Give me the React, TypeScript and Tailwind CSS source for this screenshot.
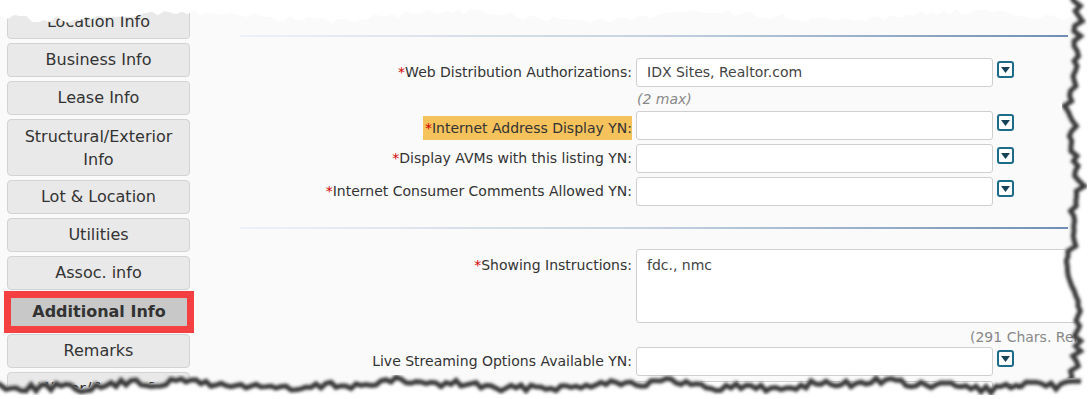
import React from "react";

const font = { fontFamily: '"DejaVu Sans", Verdana, sans-serif' };

function rand(seed: number) {
  let s = seed;
  return () => {
    s = (s * 1103515245 + 12345) % 2147483648;
    return s / 2147483648;
  };
}

// torn-paper edge points, computed once
function edge(seed: number, from: number, to: number, step: number, base: (t: number) => number, amp: number) {
  const r = rand(seed);
  const pts: [number, number][] = [];
  for (let t = from; t <= to; t += step) {
    pts.push([t, base(t) + (r() - 0.5) * amp]);
  }
  return pts;
}

const bottom = edge(7, -10, 1080, 5, (x) => 382 + Math.sin(x / 37) * 3 + Math.sin(x / 11) * 1.5, 7);
const right = edge(13, -10, 400, 5, (y) => 1071 + Math.sin(y / 23) * 4 + Math.sin(y / 9) * 2, 9);
const top = edge(29, -10, 1090, 6, (x) => 16 + Math.sin(x / 41) * 4, 7);

const line = (p: [number, number][]) => p.map(([a, b]) => `${a},${b}`).join(" ");
const bottomLine = line(bottom);
const rightLine = right.map(([y, x]) => `${x},${y}`).join(" ");
const topLine = line(top);

function TornEdges() {
  return (
    <svg className="absolute inset-0 pointer-events-none" width={1088} height={399}>
      <defs>
        <filter id="blur" x="-10%" y="-10%" width="120%" height="120%">
          <feGaussianBlur stdDeviation="1.6" />
        </filter>
      </defs>
      {/* top: soft white tear */}
      <polygon points={`-10,-10 ${topLine} 1090,-10`} fill="#ffffff" />
      {/* right */}
      <polygon points={`${rightLine} 1100,400 1100,-10`} fill="#ffffff" />
      <polyline points={rightLine} fill="none" stroke="#3a3a3a" strokeWidth={5} filter="url(#blur)" transform="translate(3,1)" />
      {/* bottom */}
      <polygon points={`${bottomLine} 1090,410 -10,410`} fill="#ffffff" />
      <polyline points={bottomLine} fill="none" stroke="#3a3a3a" strokeWidth={5} filter="url(#blur)" transform="translate(1,3)" />
    </svg>
  );
}

function NavButton({ label, tall }: { label: React.ReactNode; tall?: boolean }) {
  return (
    <div
      className={`w-[183px] ${tall ? "h-[57px] leading-[23px]" : "h-[34px]"} shrink-0 flex items-center justify-center text-center rounded-[4px] border border-[#d3d3d3] bg-[#e9e9e9] text-[16px] text-[#333]`}
    >
      <span>{label}</span>
    </div>
  );
}

function Dropdown() {
  return (
    <div className="ml-[4px] self-start mt-[3px] w-[17px] h-[17px] rounded-[3px] border-[2px] border-[#1b6b89] bg-white flex items-center justify-center">
      <svg width="9" height="6" viewBox="0 0 9 6">
        <polygon points="0,0 9,0 4.5,6" fill="#16435a" />
      </svg>
    </div>
  );
}

function Req() {
  return <span className="text-[#d00000]">*</span>;
}

function Row({ label, value, highlight }: { label?: React.ReactNode; value?: string; highlight?: boolean }) {
  return (
    <div className="flex items-center h-[29px]">
      <div className="w-[439px] pr-[4px] text-right text-[14px] text-[#333]">
        {highlight ? <span className="inline-block bg-[#f5c25c] leading-[24px] pl-[2px] mt-[5px]">{label}</span> : label}
      </div>
      <div className="w-[357px] h-[29px] rounded-[3px] border border-[#cfcfcf] bg-white px-[10px] flex items-center text-[14px] text-[#444]">
        {value}
      </div>
      <Dropdown />
    </div>
  );
}

function Divider() {
  return <div className="ml-[43px] w-[828px] h-[2px] shrink-0 bg-gradient-to-r from-[#eef2f6] via-[#c4d2e0] to-[#6f8fb3]" />;
}

export default function App() {
  return (
    <div className="relative w-[1088px] h-[399px] overflow-hidden bg-[#fafafa] flex" style={font}>
      {/* sidebar */}
      <div className="w-[197px] pl-[7px] pt-[5px] flex flex-col gap-[4px] shrink-0">
        <NavButton label="Location Info" />
        <NavButton label="Business Info" />
        <NavButton label="Lease Info" />
        <NavButton tall label={<>Structural/Exterior<br />Info</>} />
        <NavButton label="Lot &amp; Location" />
        <NavButton label="Utilities" />
        <NavButton label="Assoc. info" />
        <div className="-ml-[3px] -mt-[3px] -mb-[3px] w-[190px] h-[42px] shrink-0 border-[7px] border-[#f44040] bg-[#c8c8c8] flex items-center justify-center text-[16px] font-bold text-[#333]">
          Additional Info
        </div>
        <NavButton label="Remarks" />
        <NavButton label="Water/Sewer &amp;" />
      </div>

      {/* form */}
      <div className="flex-1 flex flex-col pt-[35px]">
        <Divider />
        <div className="mt-[21px]">
          <Row label={<><Req />Web Distribution Authorizations:</>} value="IDX Sites, Realtor.com" />
        </div>
        <div className="h-[24px] shrink-0 pl-[440px] pt-[2px] text-[14px] italic text-[#888]">(2 max)</div>
        <Row highlight label={<><Req />Internet Address Display YN:</>} />
        <div className="mt-[4px]">
          <Row label={<><Req />Display AVMs with this listing YN:</>} />
        </div>
        <div className="mt-[4px]">
          <Row label={<><Req />Internet Consumer Comments Allowed YN:</>} />
        </div>
        <div className="mt-[21px]">
          <Divider />
        </div>
        <div className="mt-[20px] flex items-start">
          <div className="w-[439px] pr-[4px] pt-[6px] text-right text-[14px] text-[#333]">
            <Req />Showing Instructions:
          </div>
          <div className="w-[470px] h-[74px] rounded-[3px] border border-[#cfcfcf] bg-white px-[10px] pt-[5px] text-[14px] text-[#444]">
            fdc., nmc
          </div>
        </div>
        <div className="h-[24px] shrink-0 pl-[773px] pt-[4px] text-[14px] text-[#888] whitespace-nowrap">(291 Chars. Remaining)</div>
        <Row label="Live Streaming Options Available YN:" />
        <div className="mt-[5px]">
          <Row />
        </div>
      </div>

      <TornEdges />
    </div>
  );
}
